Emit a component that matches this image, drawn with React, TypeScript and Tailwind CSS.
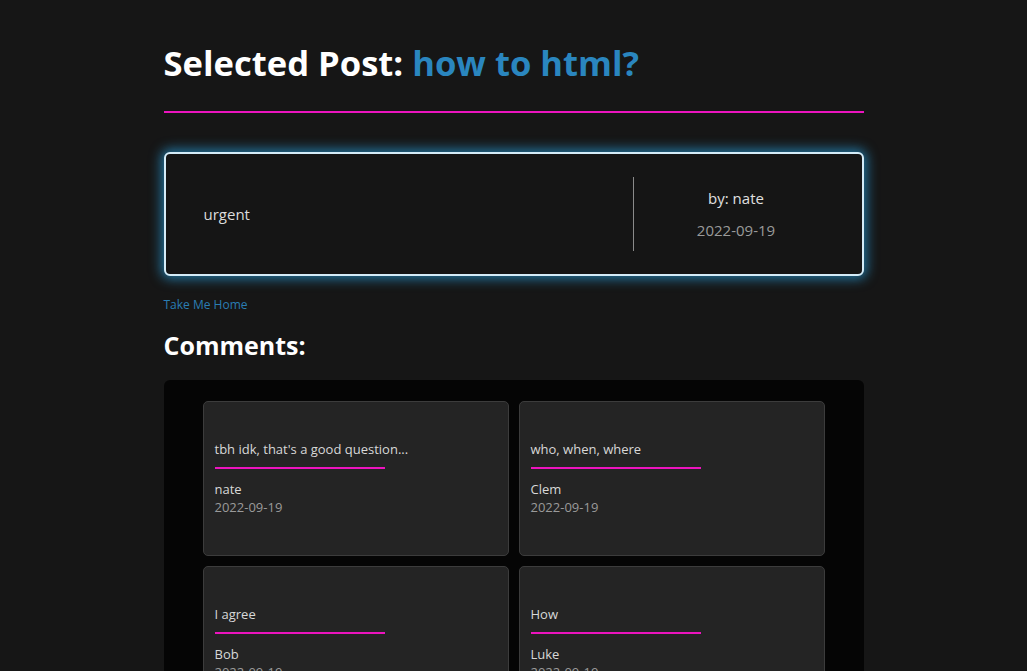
const comments = [
  { text: "tbh idk, that's a good question...", author: "nate", date: "2022-09-19" },
  { text: "who, when, where", author: "Clem", date: "2022-09-19" },
  { text: "I agree", author: "Bob", date: "2022-09-19" },
  { text: "How", author: "Luke", date: "2022-09-19" },
];

function CommentCard({ text, author, date }: { text: string; author: string; date: string }) {
  return (
    <div className="bg-[#242424] border border-[#3c3c3c] rounded-[5px] px-[11px] pt-[38px] pb-[39px] text-[13px] leading-[18px]">
      <p className="text-[#d8d8d8]">{text}</p>
      <div className="w-[170px] h-[2px] bg-[#ec14be] mt-[9px] mb-[11px]" />
      <p className="text-[#d8d8d8]">{author}</p>
      <p className="text-[#9a9a9a]">{date}</p>
    </div>
  );
}

export default function App() {
  return (
    <div className="min-h-screen bg-[#161616] font-['Open_Sans',sans-serif]">
      <div className="w-[700px] mx-auto pt-[38px]">
        <h1 className="text-[34.6px] leading-[49px] font-bold text-white">
          Selected Post: <span className="text-[#2a86bf]">how to html?</span>
        </h1>
        <div className="h-[2px] bg-[#ec14be] mt-[24px]" />

        <div className="mt-[39px] border-2 border-[#d4ecf8] rounded-[6px] bg-[#151515] p-[23px] flex shadow-[0_0_12px_3px_rgba(40,155,215,0.7)]">
          <div className="flex-1 flex items-center pl-[15px] text-[15px] text-[#dcdcdc]">urgent</div>
          <div className="w-[206px] border-l border-[#8a8a8a] flex flex-col items-center justify-center gap-[11px] py-[10.5px] text-[15px] leading-[21px]">
            <p className="text-[#e0e0e0]">by: nate</p>
            <p className="text-[#9a9a9a]">2022-09-19</p>
          </div>
        </div>

        <a href="#" className="block mt-[20px] text-[12px] leading-[17px] text-[#2a7db3]">Take Me Home</a>

        <h2 className="mt-[15px] text-[25px] leading-[34px] font-bold text-white">Comments:</h2>

        <div className="mt-[18px] bg-[#050505] rounded-[6px] px-[39px] pt-[21px] pb-[21px] grid grid-cols-2 gap-[10px]">
          {comments.map((c, i) => (
            <CommentCard key={i} {...c} />
          ))}
        </div>
      </div>
    </div>
  );
}
